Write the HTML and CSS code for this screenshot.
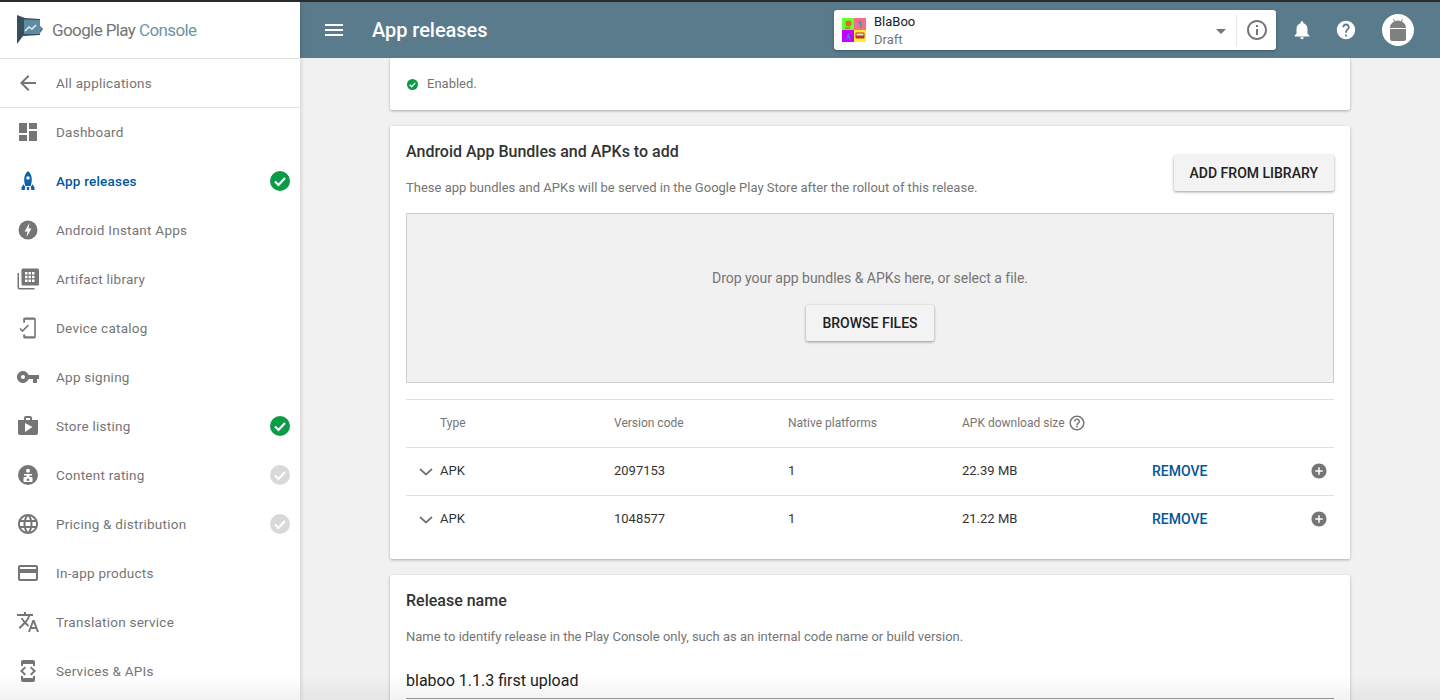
FILE: index.html
```html
<!DOCTYPE html>
<html lang="en">
<head>
<meta charset="utf-8">
<title>App releases</title>
<link rel="stylesheet" href="styles.css">
</head>
<body>
<div class="topline"></div>
<div class="app">
  <aside class="sidebar">
    <div class="logo">
      <svg class="logo-mark" viewBox="0 0 26 29" width="26" height="29">
        <path d="M0 0l8 3 15 1v7l3 3-3 4v2L6 21l-6 8z" fill="#34505d"/>
        <path d="M7 4.500l16 .5v6.500l2 2.500-2 3v2H7z" fill="#5f8ca3"/>
        <path d="M8 16l4-4 3 2 4-4" fill="none" stroke="#e4eef3" stroke-width="1.500"/>
      </svg>
      <span class="logo-text">Google Play <span class="logo-accent">Console</span></span>
    </div>
    <a class="back-row">
      <svg class="ic" viewBox="0 0 24 24"><path d="M20 11H7.830l5.590-5.590L12 4l-8 8 8 8 1.410-1.410L7.830 13H20v-2z"/></svg>
      <span>All applications</span>
    </a>
    <nav class="nav">
      <a class="nav-item"><svg class="ic" viewBox="0 0 24 24"><path d="M3 13h8V3H3v10zm0 8h8v-6H3v6zm10 0h8V11h-8v10zm0-18v6h8V3h-8z"/></svg><span>Dashboard</span></a>
      <a class="nav-item active"><svg class="ic" viewBox="0 0 24 24"><path d="M12 2c-2.600 2-3.800 5-3.800 8.500 0 2.500.5 4.700 1.200 6.500h5.200c.7-1.800 1.200-4 1.200-6.500C15.800 7 14.600 4 12 2zm0 8.800a1.800 1.800 0 1 1 0-3.600 1.800 1.800 0 0 1 0 3.600zM7.400 15.200 5.500 18.500V21h3.200l.6-3zM16.600 15.200l1.900 3.300V21h-3.200l-.6-3zM10.800 18h2.400v3h-2.400z"/></svg><span>App releases</span><svg class="status" viewBox="0 0 20 20"><circle cx="10" cy="10" r="10" fill="#0a9b48"/><path d="M5 10.500l3.500 3.500L15 7" fill="none" stroke="#fff" stroke-width="2.200"/></svg></a>
      <a class="nav-item"><svg class="ic" viewBox="0 0 24 24"><path fill-rule="evenodd" d="M12 2.500a9.500 9.500 0 1 0 0 19 9.500 9.500 0 0 0 0-19zM13.500 5l-5 8.500h3L10.500 19l5-8.500h-3z"/></svg><span>Android Instant Apps</span></a>
      <a class="nav-item"><svg class="ic" viewBox="0 0 24 24"><path fill-rule="evenodd" d="M3 6H1.500v14.500c0 1 .8 2 2 2h15V21H4c-.6 0-1-.4-1-1zM7 1.500h14.500c1 0 1.500.7 1.500 1.500v14c0 1-.7 1.500-1.500 1.500H7c-1 0-1.500-.7-1.500-1.500V3c0-1 .7-1.500 1.500-1.500zM9 5v2.500h2.500V5zm3.500 0v2.500H15V5zM16 5v2.500h2.500V5zM9 8.800v2.500h2.500V8.800zm3.500 0v2.500H15V8.800zm3.500 0v2.500h2.500V8.800zM9 12.500V15h2.500v-2.500zm3.500 0V15H15v-2.500zm3.500 0V15h2.500v-2.500z"/></svg><span>Artifact library</span></a>
      <a class="nav-item"><svg class="ic" viewBox="0 0 24 24"><path d="M9 1.500h9c1 0 1.800.8 1.800 1.800v17.400c0 1-.8 1.800-1.800 1.800h-9c-1 0-1.800-.8-1.800-1.800V18.500h2v1.700h9V3.800H9v3H7.200V3.300C7.200 2.300 8 1.500 9 1.500z"/><path d="M4 12.500l2.500 2.500 6-6" fill="none" stroke="#757575" stroke-width="1.600"/></svg><span>Device catalog</span></a>
      <a class="nav-item"><svg class="ic" viewBox="0 0 24 24"><path d="M12.650 10C11.830 7.670 9.610 6 7 6c-3.310 0-6 2.690-6 6s2.690 6 6 6c2.610 0 4.830-1.670 5.650-4H17v4h4v-4h2v-4H12.650zM7 14c-1.100 0-2-.9-2-2s.9-2 2-2 2 .9 2 2-.9 2-2 2z"/></svg><span>App signing</span></a>
      <a class="nav-item"><svg class="ic" viewBox="0 0 24 24"><path d="M16 6V4c0-1.110-.89-2-2-2h-4c-1.110 0-2 .89-2 2v2H2v13c0 1.110.89 2 2 2h16c1.110 0 2-.89 2-2V6h-6zm-6-2h4v2h-4V4zM9 18V9l7.500 4L9 18z"/></svg><span>Store listing</span><svg class="status" viewBox="0 0 20 20"><circle cx="10" cy="10" r="10" fill="#0a9b48"/><path d="M5 10.500l3.500 3.500L15 7" fill="none" stroke="#fff" stroke-width="2.200"/></svg></a>
      <a class="nav-item"><svg class="ic" viewBox="0 0 24 24"><path fill-rule="evenodd" d="M12 2a10 10 0 1 0 0 20 10 10 0 0 0 0-20zm0 3.800a2 2 0 1 1 0 4 2 2 0 0 1 0-4zM8 11h8v1.600h-2.500V14h1.800a1.200 1.200 0 0 1 1.200 1.200V18c0 .6-.5 1-1 1H8.500c-.5 0-1-.4-1-1v-2.800A1.200 1.200 0 0 1 8.700 14h1.800v-1.400H8zm4 4.500a1.300 1.300 0 1 0 0 2.600 1.300 1.300 0 0 0 0-2.600z"/></svg><span>Content rating</span><svg class="status" viewBox="0 0 20 20"><circle cx="10" cy="10" r="10" fill="#d9d9d9"/><path d="M5 10.500l3.500 3.500L15 7" fill="none" stroke="#fff" stroke-width="2.200"/></svg></a>
      <a class="nav-item"><svg class="ic" viewBox="0 0 24 24"><path d="M11.990 2C6.470 2 2 6.480 2 12s4.470 10 9.990 10C17.520 22 22 17.520 22 12S17.520 2 11.990 2zm6.930 6h-2.950c-.32-1.250-.78-2.450-1.380-3.560 1.840.63 3.370 1.910 4.330 3.560zM12 4.040c.83 1.200 1.480 2.530 1.910 3.960h-3.820c.43-1.430 1.080-2.760 1.910-3.960zM4.260 14C4.100 13.360 4 12.690 4 12s.1-1.360.26-2h3.380c-.08.66-.14 1.320-.14 2 0 .68.06 1.340.14 2H4.260zm.82 2h2.950c.32 1.250.78 2.450 1.380 3.560-1.840-.63-3.370-1.900-4.330-3.560zm2.950-8H5.080c.96-1.660 2.490-2.930 4.330-3.560C8.810 5.550 8.350 6.750 8.030 8zM12 19.960c-.83-1.200-1.480-2.530-1.910-3.960h3.820c-.43 1.430-1.080 2.760-1.910 3.960zM14.340 14H9.660c-.09-.66-.16-1.320-.16-2 0-.68.07-1.350.16-2h4.680c.09.65.16 1.320.16 2 0 .68-.07 1.340-.16 2zm.25 5.560c.6-1.110 1.060-2.310 1.380-3.560h2.950c-.96 1.650-2.490 2.930-4.330 3.560zM16.360 14c.08-.66.14-1.320.14-2 0-.68-.06-1.340-.14-2h3.380c.16.64.26 1.310.26 2s-.1 1.360-.26 2h-3.380z"/></svg><span>Pricing &amp; distribution</span><svg class="status" viewBox="0 0 20 20"><circle cx="10" cy="10" r="10" fill="#d9d9d9"/><path d="M5 10.500l3.500 3.500L15 7" fill="none" stroke="#fff" stroke-width="2.200"/></svg></a>
      <a class="nav-item"><svg class="ic" viewBox="0 0 24 24"><path d="M20 4H4c-1.110 0-1.990.89-1.990 2L2 18c0 1.110.89 2 2 2h16c1.110 0 2-.89 2-2V6c0-1.110-.89-2-2-2zm0 14H4v-6h16v6zm0-10H4V6h16v2z"/></svg><span>In-app products</span></a>
      <a class="nav-item"><svg class="ic" viewBox="0 0 24 24"><path d="M12.870 15.070l-2.540-2.510.03-.03c1.740-1.940 2.980-4.170 3.710-6.530H17V4h-7V2H8v2H1v1.990h11.170C11.500 7.920 10.440 9.750 9 11.350 8.070 10.320 7.300 9.190 6.690 8h-2c.73 1.630 1.730 3.170 2.980 4.560l-5.090 5.020L4 19l5-5 3.110 3.110.76-2.040zM18.500 10h-2L12 22h2l1.120-3h4.750L21 22h2l-4.500-12zm-2.620 7l1.620-4.330L19.120 17h-3.240z"/></svg><span>Translation service</span></a>
      <a class="nav-item"><svg class="ic" viewBox="0 0 24 24"><path d="M7 5h10v2h2V3c0-1.100-.9-1.990-2-1.990L7 1c-1.100 0-2 .9-2 2v4h2V5zm8.410 11.590L20 12l-4.590-4.590L14 8.830 17.170 12 14 15.170l1.410 1.420zM10 15.170L6.830 12 10 8.830 8.590 7.410 4 12l4.590 4.590L10 15.170zM17 19H7v-2H5v4c0 1.100.9 2 2 2h10c1.100 0 2-.9 2-2v-4h-2v2z"/></svg><span>Services &amp; APIs</span></a>
    </nav>
  </aside>

  <div class="main">
    <header class="topbar">
      <svg class="menu-ic" viewBox="0 0 24 24"><path d="M3 18h18v-2H3v2zm0-5h18v-2H3v2zm0-7v2h18V6H3z"/></svg>
      <h1 class="page-title">App releases</h1>
      <div class="app-picker">
        <svg class="app-thumb" viewBox="0 0 24 24" width="24" height="24">
          <rect width="12" height="12" fill="#66ff33"/><rect x="12" width="12" height="12" fill="#f56d8c"/>
          <rect y="12" width="12" height="12" fill="#c400ff"/><rect x="12" y="12" width="12" height="12" fill="#ffee22"/>
          <circle cx="6.500" cy="5.500" r="3" fill="#e8671c"/><path d="M3 9.500h5v1.200H3z" fill="#d9541a"/>
          <path d="M17 3h2.500v7H18V5.500l-1.500.5z" fill="#2fa58e"/>
          <path d="M4 22l2-7h1l2 7H7.500l-.4-1.500H5.400L5 22z" fill="#4a78e8"/>
          <rect x="13.500" y="14.500" width="9" height="6" rx="1" fill="#b5323c"/><rect x="14.500" y="15.500" width="7" height="2" fill="#f3e6c8"/>
        </svg>
        <div class="app-meta">
          <div class="app-name">BlaBoo</div>
          <div class="app-state">Draft</div>
        </div>
        <span class="caret"></span>
        <span class="picker-sep"></span>
        <svg class="info-ic" viewBox="0 0 24 24"><path d="M11 17h2v-6h-2v6zm1-15C6.480 2 2 6.480 2 12s4.480 10 10 10 10-4.480 10-10S17.520 2 12 2zm0 18c-4.410 0-8-3.590-8-8s3.590-8 8-8 8 3.590 8 8-3.590 8-8 8zM11 9h2V7h-2v2z"/></svg>
      </div>
      <svg class="bar-ic" viewBox="0 0 24 24"><path d="M12 22c1.100 0 2-.9 2-2h-4c0 1.100.9 2 2 2zm6-6v-5c0-3.070-1.630-5.640-4.500-6.320V4c0-.83-.67-1.500-1.500-1.500s-1.500.67-1.500 1.500v.68C7.640 5.360 6 7.920 6 11v5l-2 2v1h16v-1l-2-2z"/></svg>
      <svg class="bar-ic" viewBox="0 0 24 24"><path d="M12 2C6.480 2 2 6.480 2 12s4.480 10 10 10 10-4.480 10-10S17.520 2 12 2zm1 17h-2v-2h2v2zm2.070-7.750l-.9.92C13.450 12.900 13 13.500 13 15h-2v-.5c0-1.100.45-2.100 1.170-2.830l1.240-1.260c.37-.36.59-.86.59-1.410 0-1.100-.9-2-2-2s-2 .9-2 2H8c0-2.210 1.790-4 4-4s4 1.790 4 4c0 .88-.36 1.680-.93 2.250z"/></svg>
      <div class="avatar">
        <svg viewBox="0 0 16 22" width="16" height="22"><path d="M0 9C0 5.500 2.500 3.500 4.200 2.600L3 .6 3.700 0l1.500 2.200a7 7 0 0 1 5.600 0L12.300 0l.7.6-1.200 2C13.500 3.500 16 5.500 16 9z" fill="#808080"/><path d="M0 10h16v10c0 1-1 2-2 2H2c-1 0-2-1-2-2z" fill="#808080"/></svg>
      </div>
    </header>

    <main class="content">
      <section class="card card-enabled">
        <svg class="mini-check" viewBox="0 0 20 20"><circle cx="10" cy="10" r="10" fill="#0a9b48"/><path d="M5 10.500l3.500 3.500L15 7" fill="none" stroke="#fff" stroke-width="2.400"/></svg>
        <span>Enabled.</span>
      </section>

      <section class="card card-bundles">
        <div class="card-head">
          <div class="card-head-text">
            <h2 class="card-title">Android App Bundles and APKs to add</h2>
            <p class="card-sub">These app bundles and APKs will be served in the Google Play Store after the rollout of this release.</p>
          </div>
          <button class="btn">ADD FROM LIBRARY</button>
        </div>
        <div class="dropzone">
          <p class="drop-text">Drop your app bundles &amp; APKs here, or select a file.</p>
          <button class="btn">BROWSE FILES</button>
        </div>
        <div class="apk-table">
          <div class="apk-row apk-head">
            <span></span><span>Type</span><span>Version code</span><span>Native platforms</span>
            <span class="size-head">APK download size <svg class="help-ic" viewBox="0 0 24 24"><path d="M11 18h2v-2h-2v2zm1-16C6.480 2 2 6.480 2 12s4.480 10 10 10 10-4.480 10-10S17.520 2 12 2zm0 18c-4.410 0-8-3.590-8-8s3.590-8 8-8 8 3.590 8 8-3.590 8-8 8zm0-14c-2.210 0-4 1.790-4 4h2c0-1.100.9-2 2-2s2 .9 2 2c0 2-3 1.750-3 5h2c0-2.250 3-2.500 3-5 0-2.210-1.790-4-4-4z"/></svg></span>
            <span></span><span></span>
          </div>
          <div class="apk-row">
            <svg class="chev" viewBox="0 0 14 8"><path d="M1 1l6 5.500L13 1" fill="none" stroke="#757575" stroke-width="1.700"/></svg>
            <span>APK</span><span>2097153</span><span>1</span><span>22.39 MB</span><a class="remove">REMOVE</a>
            <svg class="add-ic" viewBox="0 0 24 24"><path d="M12 2C6.480 2 2 6.480 2 12s4.480 10 10 10 10-4.480 10-10S17.520 2 12 2zm5 11h-4v4h-2v-4H7v-2h4V7h2v4h4v2z"/></svg>
          </div>
          <div class="apk-row">
            <svg class="chev" viewBox="0 0 14 8"><path d="M1 1l6 5.500L13 1" fill="none" stroke="#757575" stroke-width="1.700"/></svg>
            <span>APK</span><span>1048577</span><span>1</span><span>21.22 MB</span><a class="remove">REMOVE</a>
            <svg class="add-ic" viewBox="0 0 24 24"><path d="M12 2C6.480 2 2 6.480 2 12s4.480 10 10 10 10-4.480 10-10S17.520 2 12 2zm5 11h-4v4h-2v-4H7v-2h4V7h2v4h4v2z"/></svg>
          </div>
        </div>
      </section>

      <section class="card card-release">
        <h2 class="card-title">Release name</h2>
        <p class="card-sub release-sub">Name to identify release in the Play Console only, such as an internal code name or build version.</p>
        <div class="release-input">blaboo 1.1.3 first upload</div>
      </section>
    </main>
  </div>
</div>
<div class="bottom-fade"></div>
</body>
</html>
```
FILE: styles.css
```css
* { box-sizing: border-box; }
html, body { margin: 0; height: 700px; overflow: hidden; }
body { font-family: Roboto, "Liberation Sans", sans-serif; background: #f1f1f1; color: #212121; position: relative; }
h1, h2, p { margin: 0; }

.topline { position: absolute; top: 0; left: 0; right: 0; height: 2px; background: #2b2b2b; z-index: 5; }
.app { display: flex; height: 700px; }

.sidebar { width: 300px; flex: none; background: #fff; box-shadow: 0 0 5px rgba(0,0,0,.2); position: relative; z-index: 2; overflow: hidden; }
.logo { height: 59px; padding: 15px 0 0 17px; display: flex; align-items: flex-start; gap: 9px; border-bottom: 1px solid #e0e0e0; }
.logo-mark { flex: none; }
.logo-text { font-size: 17px; line-height: 30px; color: #757575; letter-spacing: -.6px; }
.logo-accent { color: #6f94a6; }

.ic { width: 24px; height: 24px; flex: none; fill: #757575; }
.back-row { height: 49px; display: flex; align-items: center; gap: 16px; padding: 0 0 1px 16px; border-bottom: 1px solid #e0e0e0; font-size: 13.5px; letter-spacing: .25px; color: #757575; }
.nav-item { height: 49px; display: flex; align-items: center; gap: 16px; padding: 0 10px 1px 16px; font-size: 13.5px; letter-spacing: .25px; color: #757575; }
.nav-item span { flex: 1; }
.nav-item.active { color: #01579b; font-weight: 500; letter-spacing: .2px; }
.nav-item.active .ic { fill: #0d62b0; }
.status { width: 20px; height: 20px; flex: none; }

.main { flex: 1; min-width: 0; display: flex; flex-direction: column; }
.topbar { height: 58px; flex: none; background: #5a7b8b; padding: 2px 26px 0 22px; display: flex; align-items: center; position: relative; z-index: 1; }
.menu-ic { width: 24px; height: 24px; fill: #fff; flex: none; }
.page-title { font-size: 20px; font-weight: 500; color: #fff; margin-left: 26px; flex: none; width: 462px; letter-spacing: -.05px; }
.app-picker { width: 442px; height: 40px; flex: none; background: #fff; border-radius: 3px; box-shadow: 0 1px 3px rgba(0,0,0,.3); display: flex; align-items: center; padding-left: 8px; }
.app-thumb { flex: none; }
.app-meta { margin-left: 8px; flex: 1; padding-top: 2px; }
.app-name { font-size: 13px; line-height: 18px; color: #212121; }
.app-state { font-size: 13px; line-height: 18px; color: #757575; }
.caret { width: 0; height: 0; border-left: 5px solid transparent; border-right: 5px solid transparent; border-top: 5px solid #757575; margin-top: 2px; }
.picker-sep { width: 1px; height: 32px; background: #e8e8e8; margin-left: 10px; }
.info-ic { width: 24px; height: 24px; fill: #757575; margin: 0 7px 0 8px; }
.bar-ic { width: 22px; height: 22px; fill: #fff; flex: none; margin-left: 15px; margin-right: 7px; }
.avatar { width: 32px; height: 32px; flex: none; border-radius: 50%; background: #fff; display: flex; align-items: center; justify-content: center; margin-left: 18px; }

.content { flex: 1; min-height: 0; overflow: hidden; padding: 0 90px; }
.card { width: 960px; background: #fff; border-radius: 2px; box-shadow: 0 1px 3px rgba(0,0,0,.3); margin-bottom: 16px; padding: 16px; }
.card-enabled { height: 52px; padding: 0 16px 2px 17px; display: flex; align-items: center; gap: 9px; font-size: 13px; color: #757575; }
.mini-check { width: 11px; height: 11px; flex: none; margin-top: 2px; }
.card-bundles { height: 433px; }
.card-head { height: 55px; display: flex; justify-content: space-between; align-items: flex-end; }
.card-head-text { align-self: flex-start; }
.card-title { font-size: 16px; line-height: 20px; font-weight: 500; color: #333; }
.card-sub { font-size: 13px; line-height: 16px; color: #757575; margin-top: 18px; }
.btn { width: auto; height: 36px; padding: 0 16px; border: 0; border-radius: 2px; background: #f3f3f3; box-shadow: 0 1px 3px rgba(0,0,0,.4); font: 500 14px Roboto, sans-serif; color: #212121; }
.card-head .btn { margin-bottom: 6px; }

.dropzone { height: 170px; margin-top: 16px; background: #f1f1f1; border: 1px solid #ccc; border-radius: 1px; display: flex; flex-direction: column; align-items: center; padding-top: 55px; }
.drop-text { font-size: 14px; line-height: 18px; color: #757575; letter-spacing: -.02px; margin-bottom: 18px; }

.apk-table { margin-top: 16px; border-top: 1px solid #e0e0e0; }
.apk-row { height: 48px; display: grid; grid-template-columns: 34px 174px 174px 174px 190px 1fr 24px; align-items: center; border-bottom: 1px solid #e0e0e0; font-size: 13px; color: #333; padding: 0 3px 2px 0; }
.apk-row:last-child { border-bottom-color: transparent; }
.apk-head { color: #757575; font-size: 12px; }
.size-head { display: flex; align-items: center; gap: 3px; white-space: nowrap; }
.help-ic { width: 18px; height: 18px; fill: #757575; flex: none; }
.chev { width: 14px; height: 8px; margin: 2px 0 0 13px; }
.remove { font-size: 14px; font-weight: 500; color: #01579b; margin-top: 1px; }
.add-ic { width: 18px; height: 18px; fill: #757575; justify-self: center; }

.card-release { padding-top: 16px; }
.release-sub { margin-top: 18px; }
.release-input { margin-top: 25px; height: 29px; font-size: 16px; line-height: 22px; color: #212121; border-bottom: 1px solid #9e9e9e; }

.bottom-fade { position: absolute; left: 0; right: 0; bottom: 0; height: 24px; z-index: 6; pointer-events: none; background: linear-gradient(to bottom, rgba(0,0,0,0), rgba(0,0,0,.05)); }
```
